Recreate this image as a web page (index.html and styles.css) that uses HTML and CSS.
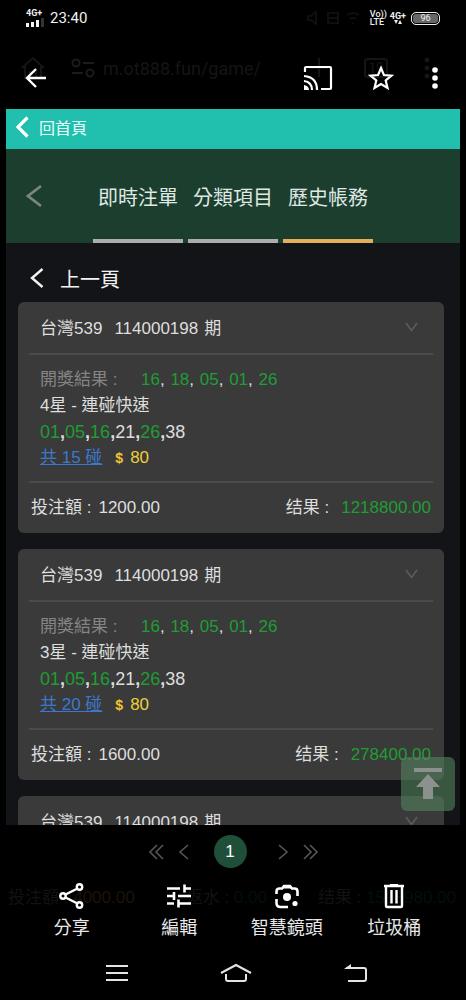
FILE: index.html
```html
<!DOCTYPE html>
<html lang="zh-Hant">
<head>
<meta charset="utf-8">
<meta name="viewport" content="width=device-width, initial-scale=1">
<title>歷史帳務</title>
<link rel="stylesheet" href="styles.css">
</head>
<body>
<div class="screen">
  <header class="top">
    <div class="status">
      <div class="signal">
        <span class="net">4G+</span>
        <svg width="18" height="9" viewBox="0 0 18 9"><path d="M0 5h3v4H0zM5 4h3v5H5zM10 2h3v7h-3z" fill="#f4f4f4"/><path d="M15 0h3v9h-3z" fill="#333"/></svg>
      </div>
      <span class="clock">23:40</span>
      <svg class="faint-icons" width="58" height="14" viewBox="0 0 58 14" fill="none" stroke="#0f0f0f" stroke-width="2"><path d="M2 5h3l5-4v12L5 9H2zM22 2h10v10H22zM22 7h10M41 4q6-4 12 0M44 8q3-2 6 0M47 12v1"/></svg>
      <div class="volte"><span>Vo))</span><span>LTE</span></div>
      <div class="data">
        <span class="net">4G+</span>
        <svg width="8" height="4" viewBox="0 0 8 4" fill="#eee"><path d="M0 0h4L2 4zM4 4h4L6 0z"/></svg>
      </div>
      <div class="battery">96</div>
    </div>
    <div class="toolbar">
      <button class="icon back" aria-label="返回"><svg width="22" height="20" viewBox="0 0 22 20" fill="none" stroke="#fff" stroke-width="2.4"><path d="M11 1 2 10l9 9M2 10h19"/></svg></button>
      <button class="icon" aria-label="投放"><svg width="30" height="26" viewBox="0 0 30 26" fill="none" stroke="#fff" stroke-width="2.2"><path d="M2 7V3q0-1 1-1h24q1 0 1 1v20q0 1-1 1h-9M1 11q13 1 13 14M1 16q8 1 8 9"/><path d="M1 20q5 1 5 5H1z" fill="#fff" stroke="none"/></svg></button>
      <button class="icon star" aria-label="收藏"><svg width="26" height="26" viewBox="0 0 26 26" fill="none" stroke="#fff" stroke-width="2.2"><path d="m13 3 2.900 7 7.600.6-5.800 4.900 1.800 7.400L13 19l-6.500 3.900 1.800-7.400-5.800-4.900 7.600-.6z"/></svg></button>
      <button class="icon" aria-label="更多"><svg width="6" height="22" viewBox="0 0 6 22" fill="#fff"><circle cx="3" cy="3" r="2.800"/><circle cx="3" cy="11" r="2.800"/><circle cx="3" cy="19" r="2.800"/></svg></button>
    </div>
    <div class="address" aria-hidden="true">
      <svg width="24" height="24" viewBox="0 0 24 24" fill="none" stroke="#151515" stroke-width="2"><path d="M1 12 12 2l11 10M4 10v12h5v-6h6v6h5V10"/></svg>
      <svg class="tune" width="24" height="20" viewBox="0 0 24 20" fill="none" stroke="#1b1b1b" stroke-width="2"><circle cx="5" cy="5" r="3.500"/><path d="M12 5h11M1 15h11"/><circle cx="19" cy="15" r="3.500"/></svg>
      <span class="url">m.ot888.fun/game/</span>
      <svg width="18" height="20" viewBox="0 0 18 20" stroke="#151515" stroke-width="2"><path d="M9 0v19M0 10h18"/></svg>
      <span class="count">19</span>
      <svg width="6" height="22" viewBox="0 0 6 22" fill="#151515"><circle cx="3" cy="3" r="2.500"/><circle cx="3" cy="11" r="2.500"/><circle cx="3" cy="19" r="2.500"/></svg>
    </div>
  </header>

  <main class="page">
    <a class="home" href="#"><svg width="13" height="22" viewBox="0 0 13 22" fill="none" stroke="#fff" stroke-width="3.200"><path d="m11.500 1.500-9.500 9.500 9.500 9.500"/></svg>回首頁</a>
    <nav class="tabs">
      <button class="icon prev" aria-label="上一個"><svg width="17" height="24" viewBox="0 0 17 24" fill="none" stroke="#7d8580" stroke-width="2.800"><path d="M15 2 2 12l13 10"/></svg></button>
      <button class="tab">即時注單</button>
      <button class="tab">分類項目</button>
      <button class="tab active">歷史帳務</button>
    </nav>
    <div class="content">
      <a class="up" href="#"><svg width="14" height="20" viewBox="0 0 14 20" fill="none" stroke="#f2f2f2" stroke-width="2.400"><path d="m12.500 1-10.500 9 10.500 9"/></svg>上一頁</a>

      <article class="card">
        <header class="head"><span>台灣539</span><span class="issue"><span>114000198</span><span>期</span></span><button class="icon more" aria-label="展開"><svg width="13" height="10" viewBox="0 0 13 10" fill="none" stroke="#5c5c5c" stroke-width="1.600"><path d="m1 1 5.500 7.500L12 1"/></svg></button></header>
        <div class="body">
          <p><span class="label">開獎結果 :</span><span class="draw"><b>16</b>, <b>18</b>, <b>05</b>, <b>01</b>, <b>26</b></span></p>
          <p>4星 - 連碰快速</p>
          <p class="picks"><b>01</b><i>,</i><b>05</b><i>,</i><b>16</b><i>,</i>21<i>,</i><b>26</b><i>,</i>38</p>
          <p><a class="combo" href="#">共 15 碰</a><span class="dollar">$</span><span class="price">80</span></p>
        </div>
        <footer class="foot"><span class="stake"><span>投注額 :</span><span>1200.00</span></span><span class="result"><span lang="zh-Hans">结果 :</span><b>1218800.00</b></span></footer>
      </article>

      <article class="card">
        <header class="head"><span>台灣539</span><span class="issue"><span>114000198</span><span>期</span></span><button class="icon more" aria-label="展開"><svg width="13" height="10" viewBox="0 0 13 10" fill="none" stroke="#5c5c5c" stroke-width="1.600"><path d="m1 1 5.500 7.500L12 1"/></svg></button></header>
        <div class="body">
          <p><span class="label">開獎結果 :</span><span class="draw"><b>16</b>, <b>18</b>, <b>05</b>, <b>01</b>, <b>26</b></span></p>
          <p>3星 - 連碰快速</p>
          <p class="picks"><b>01</b><i>,</i><b>05</b><i>,</i><b>16</b><i>,</i>21<i>,</i><b>26</b><i>,</i>38</p>
          <p><a class="combo" href="#">共 20 碰</a><span class="dollar">$</span><span class="price">80</span></p>
        </div>
        <footer class="foot"><span class="stake"><span>投注額 :</span><span>1600.00</span></span><span class="result"><span lang="zh-Hans">结果 :</span><b>278400.00</b></span></footer>
      </article>

      <article class="card">
        <header class="head"><span>台灣539</span><span class="issue"><span>114000198</span><span>期</span></span><button class="icon more" aria-label="展開"><svg width="13" height="10" viewBox="0 0 13 10" fill="none" stroke="#5c5c5c" stroke-width="1.600"><path d="m1 1 5.500 7.500L12 1"/></svg></button></header>
      </article>
    </div>
    <button class="totop" aria-label="回到頂端"><svg width="30" height="32" viewBox="0 0 30 32" fill="#8b918c"><path d="M1 0h28v4H1zM15 6l12 13h-7v12H10V19H3z"/></svg></button>
  </main>

  <nav class="pager" aria-label="分頁">
    <button class="icon" aria-label="第一頁"><svg width="16" height="16" viewBox="0 0 16 16" fill="none" stroke="#565656" stroke-width="1.600"><path d="M9 1 2 8l7 7M15 1 8 8l7 7"/></svg></button>
    <button class="icon" aria-label="前一頁"><svg width="11" height="16" viewBox="0 0 11 16" fill="none" stroke="#565656" stroke-width="1.600"><path d="M10 1 2 8l8 7"/></svg></button>
    <button class="current">1</button>
    <button class="icon" aria-label="下一頁"><svg width="11" height="16" viewBox="0 0 11 16" fill="none" stroke="#565656" stroke-width="1.600"><path d="m1 1 8 7-8 7"/></svg></button>
    <button class="icon" aria-label="最後一頁"><svg width="16" height="16" viewBox="0 0 16 16" fill="none" stroke="#565656" stroke-width="1.600"><path d="m1 1 7 7-7 7M7 1l7 7-7 7"/></svg></button>
  </nav>

  <footer class="bottom">
    <div class="totals" aria-hidden="true"><span>投注額 : <em>4000.00</em></span><span>返水 : <b>0.00</b></span><span lang="zh-Hans">结果 : <b>1518980.00</b></span></div>
    <div class="actions">
      <button class="action"><svg width="28" height="28" viewBox="0 0 28 28" fill="none" stroke="#fff" stroke-width="2.400"><path d="m7.500 12.500 12-6M7.500 15.500l12 6"/><circle cx="5" cy="14" r="2.700"/><circle cx="21.500" cy="5" r="2.700"/><circle cx="21.500" cy="23" r="2.700"/></svg>分享</button>
      <button class="action"><svg width="28" height="28" viewBox="0 0 28 28" fill="none" stroke="#fff" stroke-width="2.600"><path d="M2 6.500h13M19 6.500h7M19.500 2.500v8M2 14h7M13 14h13M9 10v8M2 21.500h7M13 21.500h13M13.500 17.500v8"/></svg>編輯</button>
      <button class="action"><svg width="28" height="28" viewBox="0 0 28 28" fill="none" stroke="#fff" stroke-width="2.600"><path d="M3.500 12V9.500q0-3 3-3H9l2-2.500h6l2 2.500h2.500q3 0 3 3V14M3.500 17v4q0 4 4 4H15"/><path d="M10 3.500h8v3h-8z" fill="#fff" stroke="none"/><circle cx="14" cy="15" r="4" fill="#fff" stroke="none"/><circle cx="22" cy="21.500" r="2.600" fill="#fff" stroke="none"/></svg>智慧鏡頭</button>
      <button class="action"><svg width="28" height="28" viewBox="0 0 28 28" fill="none" stroke="#fff" stroke-width="2.400"><path d="M4 4h20M6 4v20q0 1 1 1h14q1 0 1-1V4M11.500 8v13.500M16.500 8v13.500"/><path d="M10 2h8v2h-8z" fill="#fff" stroke="none"/></svg>垃圾桶</button>
    </div>
    <div class="sysnav">
      <button class="icon" aria-label="最近"><svg width="22" height="18" viewBox="0 0 22 18" stroke="#e4e4e4" stroke-width="2"><path d="M0 2h22M0 9h22M0 16h22"/></svg></button>
      <button class="icon" aria-label="主畫面"><svg width="32" height="20" viewBox="0 0 32 20" fill="none" stroke="#e4e4e4" stroke-width="2"><path d="M1 10 16 2l15 8M6 11v5q0 2 2 2h16q2 0 2-2v-5"/></svg></button>
      <button class="icon" aria-label="返回"><svg width="24" height="20" viewBox="0 0 24 20" fill="none" stroke="#e4e4e4" stroke-width="2"><path d="M2 5h18q2 0 2 2v9q0 2-2 2H4"/><path d="m0 6 7-5v5z" fill="#e4e4e4" stroke="none"/></svg></button>
    </div>
  </footer>
</div>
</body>
</html>
```
FILE: styles.css
```css
* { box-sizing: border-box; }

body {
  margin: 0;
  background: #000;
  color: #dedede;
  font-family: "Liberation Sans", "Noto Sans CJK TC", sans-serif;
  font-size: 17px;
}

button {
  padding: 0;
  border: 0;
  background: none;
  color: inherit;
  font: inherit;
}

a { color: inherit; text-decoration: none; }
b, i, em { font-weight: normal; font-style: normal; }
p { margin: 0; }
svg { display: block; flex: none; }
.icon { display: flex; align-items: center; justify-content: center; }

[lang="zh-Hans"] { font-family: "Liberation Sans", "Noto Sans CJK SC", sans-serif; }

.screen {
  display: flex;
  flex-direction: column;
  height: 100vh;
  overflow: hidden;
}

/* status bar and toolbar */
.top { position: relative; flex: none; }

.status {
  display: flex;
  align-items: center;
  height: 36px;
  padding: 0 26px;
  color: #f0f0f0;
  font-family: Roboto, sans-serif;
}

.signal, .data, .volte { display: flex; flex-direction: column; }
.signal { gap: 1px; }
.net { font-size: 9px; line-height: 8px; font-weight: 700; }
.clock { margin-left: 6px; font-size: 15px; }
.faint-icons { margin-left: auto; }
.volte { margin-left: 6px; font-size: 9px; line-height: 8px; font-weight: 500; }
.data { margin-left: 3px; align-items: center; }

.battery {
  width: 29px;
  height: 13px;
  margin-left: 5px;
  border: 1px solid #eee;
  border-radius: 5px;
  background: #666;
  box-shadow: inset 0 0 0 1px #000;
  font-size: 9px;
  line-height: 11px;
  text-align: center;
}

.toolbar {
  position: relative;
  z-index: 1;
  display: flex;
  align-items: center;
  gap: 35px;
  height: 73px;
  padding: 10px 28px 0 25px;
}
.toolbar .back { margin-right: auto; }
.toolbar .star { margin-right: 3px; }

.address {
  position: absolute;
  inset: 44px 36px auto 21px;
  display: flex;
  align-items: center;
  gap: 26px;
  height: 48px;
  color: #151515;
  font: 18px Roboto, sans-serif;
}
.address .tune { margin-right: -18px; }
.url { margin-right: auto; }
.address .count { margin: 0 10px; padding: 0 2px; border: 2px solid #151515; border-radius: 4px; font-size: 14px; }

/* page */
.page {
  position: relative;
  display: flex;
  flex-direction: column;
  flex: 1;
  min-height: 0;
  margin: 0 6px;
  background: #131418;
}

.home {
  display: flex;
  align-items: center;
  gap: 10px;
  flex: none;
  height: 40px;
  padding: 0 10px 5px;
  background: #20bfae;
  color: #e9fffb;
  font-size: 16px;
}

.tabs {
  display: flex;
  gap: 5px;
  flex: none;
  height: 94px;
  background: #1c3e2f;
  font-size: 20px;
}
.prev { width: 82px; padding-right: 26px; }
.tab { width: 90px; padding-top: 5px; border-bottom: 4px solid #aaaead; color: #dfe8e3; white-space: nowrap; }
.tab.active { border-color: #e5ae58; }

.content {
  display: flex;
  flex-direction: column;
  flex: 1;
  gap: 16px;
  min-height: 0;
  padding: 20px 16px 0 12px;
  overflow: hidden;
}

.up {
  display: flex;
  align-items: center;
  gap: 16px;
  height: 30px;
  margin-bottom: -7px;
  padding-left: 12px;
  color: #f2f2f2;
  font-size: 20px;
  flex: none;
}

.card { flex: none; padding: 0 11px; border-radius: 6px; background: #3a3a3a; }

.head {
  display: flex;
  align-items: center;
  gap: 12px;
  height: 53px;
  padding: 0 15px 2px 11px;
  border-bottom: 2px solid #4b4b4b;
}
.issue { display: flex; align-items: baseline; gap: 6px; }
.more { margin-left: auto; }

.body { padding: 12px 11px 10px; line-height: 26px; border-bottom: 2px solid #4b4b4b; }
.body p { display: flex; height: 26px; white-space: pre; }
.label { width: 100px; color: #858585; }
.body b, .result b { color: #1f9d35; }
.draw b { margin-left: 1px; }
.picks { font-size: 18px; }
.picks i { font-weight: 700; }
.combo { color: #3c78cf; text-decoration: underline; }
.dollar { margin: 0 7px 0 13px; color: #f0c534; font-size: 14px; font-weight: 700; }
.price { color: #ecd03a; }

.foot {
  display: flex;
  align-items: center;
  justify-content: space-between;
  height: 50px;
  padding: 0 2px 5px;
}
.stake, .result { display: flex; align-items: baseline; }
.stake { gap: 7px; }
.result { gap: 12px; }

.totop {
  position: absolute;
  right: 5px;
  bottom: 14px;
  display: flex;
  align-items: center;
  justify-content: center;
  width: 54px;
  height: 54px;
  border-radius: 6px;
  background: rgba(83, 130, 94, 0.6);
}

/* pagination */
.pager {
  display: flex;
  align-items: center;
  justify-content: center;
  gap: 14px;
  flex: none;
  height: 53px;
}
.current {
  width: 33px;
  height: 33px;
  margin: 0 17px 0 11px;
  border-radius: 50%;
  background: #1f4e39;
  color: #fff;
}

/* bottom actions */
.bottom { position: relative; flex: none; }

.totals {
  position: absolute;
  inset: 8px 10px auto 8px;
  display: flex;
  justify-content: space-between;
  color: #121212;
  line-height: 24px;
}
.totals em { color: #1c1405; }
.totals b { color: #031007; }

.actions {
  position: relative;
  display: grid;
  grid-template-columns: repeat(4, 1fr);
  padding: 4px 18px 0;
}
.action {
  display: flex;
  flex-direction: column;
  align-items: center;
  gap: 5px;
  height: 64px;
  color: #e8e8e8;
  font-size: 18px;
  line-height: 26px;
}

.sysnav {
  display: flex;
  align-items: center;
  justify-content: space-between;
  height: 54px;
  padding: 0 98px 0 106px;
}
```
